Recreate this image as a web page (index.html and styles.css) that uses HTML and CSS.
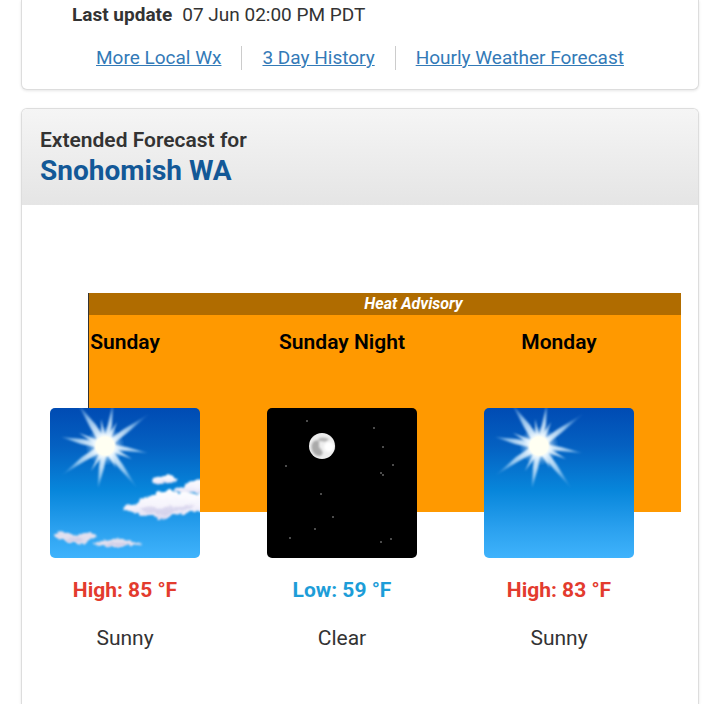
FILE: index.html
```
<!DOCTYPE html>
<html lang="en">
<head>
    <meta charset="UTF-8">
    <meta name="viewport" content="width=device-width, initial-scale=1.0">
    <title>Snohomish WA Forecast</title>
    <link rel="stylesheet" href="styles.css">
</head>
<body>
    <!-- shared icon parts -->
    <svg class="defs" aria-hidden="true">
        <defs>
            <linearGradient id="sky" x1="0" y1="0" x2="0" y2="1">
                <stop offset="0" stop-color="#004bb3"/>
                <stop offset="0.25" stop-color="#0460c1"/>
                <stop offset="0.55" stop-color="#0786db"/>
                <stop offset="0.8" stop-color="#2aa0ee"/>
                <stop offset="1" stop-color="#3fb3fc"/>
            </linearGradient>
            <radialGradient id="ray" gradientUnits="userSpaceOnUse" cx="55" cy="38" r="48">
                <stop offset="0" stop-color="#fff"/>
                <stop offset="0.3" stop-color="#eef8ff" stop-opacity="0.9"/>
                <stop offset="0.65" stop-color="#bfe2fb" stop-opacity="0.75"/>
                <stop offset="1" stop-color="#8fc8f4" stop-opacity="0.2"/>
            </radialGradient>
            <radialGradient id="glow">
                <stop offset="0" stop-color="#fffff2"/>
                <stop offset="0.45" stop-color="#fffff2"/>
                <stop offset="0.6" stop-color="#e8f6ff" stop-opacity="0.5"/>
                <stop offset="1" stop-color="#8fc8f4" stop-opacity="0"/>
            </radialGradient>
            <linearGradient id="cloud" x1="0" y1="0" x2="0" y2="1">
                <stop offset="0" stop-color="#fff"/>
                <stop offset="0.6" stop-color="#f4f2fc"/>
                <stop offset="1" stop-color="#dcdaf0"/>
            </linearGradient>
            <filter id="soft" x="-10%" y="-10%" width="120%" height="120%">
                <feGaussianBlur stdDeviation="0.8"/>
            </filter>
            <filter id="fluff" x="-10%" y="-20%" width="120%" height="140%">
                <feTurbulence type="fractalNoise" baseFrequency="0.18" numOctaves="2" seed="4" result="n"/>
                <feDisplacementMap in="SourceGraphic" in2="n" scale="5" xChannelSelector="R" yChannelSelector="G"/>
                <feGaussianBlur stdDeviation="0.9"/>
            </filter>
            <g id="sun">
                <g fill="url(#ray)" filter="url(#soft)">
                    <path d="M52 40 L40 19 L28 -4 L46 17 L58 36 Z"/>
                    <path d="M52 38 L58 16 L63 -5 L62 17 L58 39 Z"/>
                    <path d="M53 36 L74 21 L99 6 L77 25 L57 41 Z"/>
                    <path d="M55 35 L77 39 L98 45 L76 43 L54 41 Z"/>
                    <path d="M58 36 L73 57 L87 80 L69 60 L52 40 Z"/>
                    <path d="M52 38 L49 59 L48 80 L54 60 L58 39 Z"/>
                    <path d="M53 35 L32 49 L12 67 L35 53 L57 41 Z"/>
                    <path d="M56 35 L32 31 L11 29 L31 36 L54 41 Z"/>
                    <path d="M52 38 L51 11 L58 37 Z"/>
                    <path d="M52 37 L67 14 L58 40 Z"/>
                    <path d="M56 35 L29 25 L53 41 Z"/>
                    <path d="M57 35 L82 51 L53 41 Z"/>
                    <path d="M53 37 L41 63 L58 40 Z"/>
                    <path d="M58 37 L66 60 L52 39 Z"/>
                </g>
                <circle cx="55" cy="38" r="20" fill="url(#glow)"/>
            </g>
        </defs>
    </svg>

    <div class="panel current">
        <div class="updated"><b>Last update</b><span>07 Jun 02:00 PM PDT</span></div>
        <nav class="links">
            <a href="#">More Local Wx</a>
            <a href="#">3 Day History</a>
            <a href="#">Hourly Weather Forecast</a>
        </nav>
    </div>

    <div class="panel extended">
        <div class="panel-heading">
            <b>Extended Forecast for</b>
            <h2>Snohomish WA</h2>
        </div>
        <div class="forecast">
            <div class="hazard"><div class="hazard-title">Heat Advisory</div></div>
            <ul class="periods">
                <li class="period">
                    <p class="name">Sunday</p>
                    <svg class="icon" viewBox="0 0 150 150" role="img" aria-label="Sunny">
                        <rect width="150" height="150" fill="url(#sky)"/>
                        <use href="#sun"/>
                        <g fill="url(#cloud)" filter="url(#fluff)">
                            <path d="M102 72 Q105 68 111 69 Q115 69 118 66 L122 68 Q124 71 128 71 Q125 75 119 75 Q110 77 103 74 Z"/>
                            <path d="M124 82 Q128 77 134 79 Q137 73 144 73 L156 70 V86 L142 84 L134 86 Z"/>
                            <path d="M73 101 Q79 95 88 95 Q94 88 102 88 Q107 83 115 83 Q122 80 129 85 Q138 83 144 86 L157 84 V104 L139 104 Q132 108 125 106 Q119 106 117 111 Q110 113 104 108 Q94 109 88 105 Q79 104 73 101 Z"/>
                            <path fill="#e2e0ef" d="M3 126 Q9 123 14 125 Q21 124 27 128 Q34 124 40 125 Q46 126 47 128 L39 132 Q34 137 26 135 Q17 135 12 132 Q6 131 3 126 Z"/>
                            <path fill="#e2e0ef" d="M42 135 Q50 134 55 132 Q65 130 73 131 Q79 134 92 135 Q87 138 77 137 Q69 141 58 138 Q49 139 42 135 Z"/>
                        </g>
                        <g fill="#c3c0e2" opacity="0.5" filter="url(#fluff)">
                            <path d="M90 101 Q100 96 110 101 Q118 97 128 99 L146 97 Q138 103 126 103 Q113 110 105 105 Q97 107 90 101 Z"/>
                            <path d="M13 131 Q24 129 35 132 Q26 137 13 131 Z"/>
                            <path d="M55 137 Q67 133 80 136 Q67 140 55 137 Z"/>
                        </g>
                    </svg>
                    <p class="temp high">High: 85 °F</p>
                    <p class="desc">Sunny</p>
                </li>
                <li class="period">
                    <p class="name">Sunday Night</p>
                    <svg class="icon" viewBox="0 0 150 150" role="img" aria-label="Clear">
                        <rect width="150" height="150"/>
                        <circle cx="55" cy="38" r="13" fill="#eee"/>
                        <g filter="url(#soft)">
                            <path fill="#aaa" d="M46 34 Q49 31 52 33 L52 39 L55 43 Q57 46 53 48 Q48 48 46 44 Q43 39 46 34 Z"/>
                            <path fill="#b4b4b4" d="M51 31 Q55 28 62 31 Q59 35 55 33 Q52 34 51 31 Z"/>
                            <circle cx="62" cy="39" r="5" fill="#fff"/>
                        </g>
                        <g fill="#777" opacity="0.85">
                            <circle cx="40" cy="13" r="1"/>
                            <circle cx="107" cy="20" r="1"/>
                            <circle cx="116" cy="39" r="1"/>
                            <circle cx="126" cy="57" r="1"/>
                            <circle cx="114" cy="65" r="1"/>
                            <circle cx="116" cy="67" r="1"/>
                            <circle cx="19" cy="58" r="1"/>
                            <circle cx="54" cy="86" r="1"/>
                            <circle cx="66" cy="109" r="1"/>
                            <circle cx="48" cy="121" r="1"/>
                            <circle cx="23" cy="130" r="1"/>
                            <circle cx="114" cy="134" r="1"/>
                            <circle cx="124" cy="131" r="1"/>
                        </g>
                    </svg>
                    <p class="temp low">Low: 59 °F</p>
                    <p class="desc">Clear</p>
                </li>
                <li class="period">
                    <p class="name">Monday</p>
                    <svg class="icon" viewBox="0 0 150 150" role="img" aria-label="Sunny">
                        <rect width="150" height="150" fill="url(#sky)"/>
                        <use href="#sun"/>
                    </svg>
                    <p class="temp high">High: 83 °F</p>
                    <p class="desc">Sunny</p>
                </li>
            </ul>
        </div>
    </div>
</body>
</html>
```

FILE: styles.css
```
body {
    display: flex;
    flex-direction: column;
    min-height: 100vh;
    margin: 0;
    padding: 0 21px;
    box-sizing: border-box;
    background: #fff;
    color: #333;
    font-family: Roboto, sans-serif;
    font-size: 19px;
    line-height: 28px;
}

b {
    font-weight: 600;
}

p,
h2 {
    margin: 0;
}

.defs {
    position: absolute;
    width: 0;
    height: 0;
}

.panel {
    background: #fff;
    border: 1px solid #ddd;
    border-radius: 6px;
    box-shadow: 0 1px 3px rgba(0, 0, 0, 0.1);
    overflow: hidden;
}

.current {
    margin-bottom: 18px;
    border-top: none;
    border-radius: 0 0 6px 6px;
}

.extended {
    flex: 1;
    border-bottom: none;
    border-radius: 6px 6px 0 0;
}

.updated {
    display: flex;
    gap: 10px;
    padding: 1px 0 0 50px;
}

.updated b {
    font-weight: 700;
}

.links {
    display: flex;
    justify-content: center;
    padding: 17px 0 19px;
}

.links a {
    padding: 0 20px;
    line-height: 24px;
    color: #337ab7;
    text-decoration: underline;
}

.links a + a {
    border-left: 1px solid #ccc;
}

.panel-heading {
    padding: 16px 18px;
    background: linear-gradient(#f5f5f5, #e5e5e5);
    font-size: 21px;
    line-height: 30px;
}

.panel-heading h2 {
    padding-bottom: 2px;
    color: #135897;
    font-size: 28px;
    line-height: 32px;
    font-weight: 700;
}

/* hazard bar sits in the same cell, behind the periods */
.forecast {
    display: grid;
    padding: 88px 17px 20px 28px;
}

.hazard,
.periods {
    grid-area: 1 / 1;
}

.hazard {
    height: 219px;
    margin-left: 38px;
    box-sizing: border-box;
    background: #f90;
    border-left: 1px solid #333;
}

.hazard-title {
    padding-left: 57px;
    background: #b06c00;
    color: #fff;
    font-size: 16px;
    font-style: italic;
    font-weight: 700;
    line-height: 22px;
    text-align: center;
}

.periods {
    display: flex;
    gap: 67px;
    margin: 0;
    padding: 34px 0 0;
    list-style: none;
    font-size: 21px;
    line-height: 30px;
    text-align: center;
    z-index: 1;
}

.period {
    flex: 0 0 150px;
}

.name {
    height: 81px;
    color: #000;
    font-weight: 600;
}

.icon {
    display: block;
    width: 150px;
    height: 150px;
    border-radius: 5px;
}

.temp {
    margin: 17px 0 18px;
    font-weight: 700;
}

.high {
    color: #e33b2e;
}

.low {
    color: #1d9dd8;
}
```
